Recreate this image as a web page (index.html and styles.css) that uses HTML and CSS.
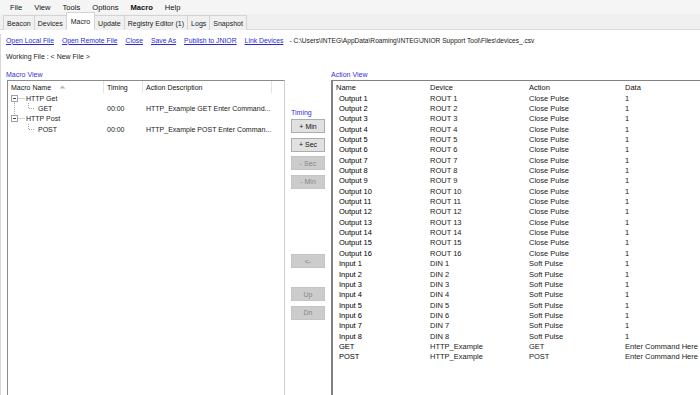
FILE: index.html
```html
<!DOCTYPE html>
<html>
<head>
<meta charset="utf-8">
<link rel="stylesheet" href="styles.css">
</head>
<body>
<div class="menubar">
  <span class="mi">File</span><span class="mi">View</span><span class="mi">Tools</span><span class="mi">Options</span><span class="mi bold">Macro</span><span class="mi">Help</span>
</div>
<div class="tabs">
  <div class="tab">Beacon</div>
  <div class="tab">Devices</div>
  <div class="tab active">Macro</div>
  <div class="tab">Update</div>
  <div class="tab">Registry Editor (1)</div>
  <div class="tab">Logs</div>
  <div class="tab">Snapshot</div>
</div>
<div class="page">
  <div class="links">
    <a class="link">Open Local File</a>
    <a class="link">Open Remote File</a>
    <a class="link">Close</a>
    <a class="link">Save As</a>
    <a class="link">Publish to JNIOR</a>
    <a class="link">Link Devices</a>
    <span class="path">- C:\Users\INTEG\AppData\Roaming\INTEG\JNIOR Support Tool\Files\devices_.csv</span>
  </div>
  <div class="working">Working File : &lt; New File &gt;</div>
  <div class="main">
    <div class="leftcol">
      <div class="glabel">Macro View</div>
      <div class="lv leftlv">
        <div class="lhead">
          <div class="hc">Macro Name <svg class="sort" width="7" height="4" viewBox="0 0 7 4"><path d="M0.5 3.5 L3.5 0.5 L6.5 3.5 Z" fill="#b8b8b8"/></svg></div>
          <div class="hc">Timing</div>
          <div class="hc">Action Description</div>
          <div class="hc last"></div>
        </div>
        <div class="lrow">
          <div class="tc"><svg class="tree" width="18" height="11" viewBox="0 0 18 11"><path d="M6.5 8.5 V11" stroke="#a8a8a8" stroke-dasharray="1 1"/><path d="M9.5 5.5 H17" stroke="#a8a8a8" stroke-dasharray="1 1"/><rect x="3.5" y="2.5" width="6" height="6" fill="#fff" stroke="#a0a0a0"/><path d="M5 5.5 H8" stroke="#444"/></svg><span>HTTP Get</span></div>
          <div class="c"></div><div class="c"></div>
        </div>
        <div class="lrow">
          <div class="tc"><svg class="tree" width="30" height="11" viewBox="0 0 30 11"><path d="M6.5 0 V11" stroke="#a8a8a8" stroke-dasharray="1 1"/><path d="M20.5 0 V5.5 H27" stroke="#a8a8a8" stroke-dasharray="1 1" fill="none"/></svg><span>GET</span></div>
          <div class="c">00:00</div><div class="c">HTTP_Example GET Enter Command...</div>
        </div>
        <div class="lrow">
          <div class="tc"><svg class="tree" width="18" height="11" viewBox="0 0 18 11"><path d="M6.5 0 V2.5" stroke="#a8a8a8" stroke-dasharray="1 1"/><path d="M9.5 5.5 H17" stroke="#a8a8a8" stroke-dasharray="1 1"/><rect x="3.5" y="2.5" width="6" height="6" fill="#fff" stroke="#a0a0a0"/><path d="M5 5.5 H8" stroke="#444"/></svg><span>HTTP Post</span></div>
          <div class="c"></div><div class="c"></div>
        </div>
        <div class="lrow">
          <div class="tc"><svg class="tree" width="30" height="11" viewBox="0 0 30 11"><path d="M20.5 0 V5.5 H27" stroke="#a8a8a8" stroke-dasharray="1 1" fill="none"/></svg><span>POST</span></div>
          <div class="c">00:00</div><div class="c">HTTP_Example POST Enter Comman...</div>
        </div>
      </div>
    </div>
    <div class="midcol">
      <div class="glabel tlabel">Timing</div>
      <div class="btngroup">
        <div class="btn">+ Min</div>
        <div class="btn">+ Sec</div>
        <div class="btn dis">- Sec</div>
        <div class="btn dis">- Min</div>
      </div>
      <div class="btn dis back">&lt;-</div>
      <div class="btngroup updn">
        <div class="btn dis">Up</div>
        <div class="btn dis">Dn</div>
      </div>
    </div>
    <div class="rightcol">
      <div class="glabel">Action View</div>
      <div class="lv rightlv">
        <div class="rhead"><div>Name</div><div>Device</div><div>Action</div><div>Data</div></div>
        <div class="rrow"><div class="nm"><span class="nt">Output 1</span></div><div>ROUT 1</div><div>Close Pulse</div><div>1</div></div>
        <div class="rrow"><div class="nm"><span class="nt">Output 2</span></div><div>ROUT 2</div><div>Close Pulse</div><div>1</div></div>
        <div class="rrow"><div class="nm"><span class="nt">Output 3</span></div><div>ROUT 3</div><div>Close Pulse</div><div>1</div></div>
        <div class="rrow"><div class="nm"><span class="nt">Output 4</span></div><div>ROUT 4</div><div>Close Pulse</div><div>1</div></div>
        <div class="rrow"><div class="nm"><span class="nt">Output 5</span></div><div>ROUT 5</div><div>Close Pulse</div><div>1</div></div>
        <div class="rrow"><div class="nm"><span class="nt">Output 6</span></div><div>ROUT 6</div><div>Close Pulse</div><div>1</div></div>
        <div class="rrow"><div class="nm"><span class="nt">Output 7</span></div><div>ROUT 7</div><div>Close Pulse</div><div>1</div></div>
        <div class="rrow"><div class="nm"><span class="nt">Output 8</span></div><div>ROUT 8</div><div>Close Pulse</div><div>1</div></div>
        <div class="rrow"><div class="nm"><span class="nt">Output 9</span></div><div>ROUT 9</div><div>Close Pulse</div><div>1</div></div>
        <div class="rrow"><div class="nm"><span class="nt">Output 10</span></div><div>ROUT 10</div><div>Close Pulse</div><div>1</div></div>
        <div class="rrow"><div class="nm"><span class="nt">Output 11</span></div><div>ROUT 11</div><div>Close Pulse</div><div>1</div></div>
        <div class="rrow"><div class="nm"><span class="nt">Output 12</span></div><div>ROUT 12</div><div>Close Pulse</div><div>1</div></div>
        <div class="rrow"><div class="nm"><span class="nt">Output 13</span></div><div>ROUT 13</div><div>Close Pulse</div><div>1</div></div>
        <div class="rrow"><div class="nm"><span class="nt">Output 14</span></div><div>ROUT 14</div><div>Close Pulse</div><div>1</div></div>
        <div class="rrow"><div class="nm"><span class="nt">Output 15</span></div><div>ROUT 15</div><div>Close Pulse</div><div>1</div></div>
        <div class="rrow"><div class="nm"><span class="nt">Output 16</span></div><div>ROUT 16</div><div>Close Pulse</div><div>1</div></div>
        <div class="rrow"><div class="nm"><span class="nt">Input 1</span></div><div>DIN 1</div><div>Soft Pulse</div><div>1</div></div>
        <div class="rrow"><div class="nm"><span class="nt">Input 2</span></div><div>DIN 2</div><div>Soft Pulse</div><div>1</div></div>
        <div class="rrow"><div class="nm"><span class="nt">Input 3</span></div><div>DIN 3</div><div>Soft Pulse</div><div>1</div></div>
        <div class="rrow"><div class="nm"><span class="nt">Input 4</span></div><div>DIN 4</div><div>Soft Pulse</div><div>1</div></div>
        <div class="rrow"><div class="nm"><span class="nt">Input 5</span></div><div>DIN 5</div><div>Soft Pulse</div><div>1</div></div>
        <div class="rrow"><div class="nm"><span class="nt">Input 6</span></div><div>DIN 6</div><div>Soft Pulse</div><div>1</div></div>
        <div class="rrow"><div class="nm"><span class="nt">Input 7</span></div><div>DIN 7</div><div>Soft Pulse</div><div>1</div></div>
        <div class="rrow"><div class="nm"><span class="nt">Input 8</span></div><div>DIN 8</div><div>Soft Pulse</div><div>1</div></div>
        <div class="rrow"><div class="nm"><span class="nt">GET</span></div><div>HTTP_Example</div><div>GET</div><div>Enter Command Here</div></div>
        <div class="rrow"><div class="nm"><span class="nt">POST</span></div><div>HTTP_Example</div><div>POST</div><div>Enter Command Here</div></div>
      </div>
    </div>
  </div>
</div>
</body>
</html>
```
FILE: styles.css
```css
* { box-sizing: border-box; }
html, body {
  margin: 0;
  padding: 0;
  width: 700px;
  height: 395px;
  overflow: hidden;
  background: #ffffff;
  font-family: "Liberation Sans", Arial, sans-serif;
  font-size: 7px;
  color: #1a1a1a;
}
.menubar {
  height: 14px;
  background: #f5f5f5;
  display: flex;
  align-items: center;
  padding-left: 10px;
  gap: 12px;
  font-size: 7.6px;
  color: #111;
}
.mi.bold { font-weight: bold; }
.tabs {
  height: 16px;
  background: #f0f0f0;
  display: flex;
  align-items: flex-end;
  padding-left: 3px;
  border-bottom: 1px solid #dadada;
}
.tab {
  height: 15px;
  padding: 0 3px;
  border: 1px solid #d4d4d4;
  border-bottom: none;
  margin-right: -1px;
  background: #f0f0f0;
  display: flex;
  align-items: center;
  font-size: 7px;
  color: #1a1a1a;
  margin-bottom: -1px;
}
.tab.active {
  height: 18px;
  background: #ffffff;
  position: relative;
  z-index: 1;
  padding: 0 4px;
}
.page {
  border-left: 1px solid #d8d8d8;
  height: 366px;
}
.links {
  height: 12px;
  margin-top: 4px;
  padding-left: 5px;
  display: flex;
  align-items: center;
  gap: 8px;
  white-space: nowrap;
  font-size: 6.85px;
}
.link {
  color: #2a2ad8;
  text-decoration: underline;
}
.path { margin-left: -2px; color: #1a1a1a; font-size: 6.6px; }
.working {
  height: 12px;
  margin-top: 4px;
  padding-left: 5px;
  display: flex;
  align-items: center;
}
.main {
  margin-top: 7px;
  display: flex;
  align-items: flex-start;
}
.glabel {
  height: 11px;
  display: flex;
  align-items: center;
  color: #3030e0;
  font-size: 7px;
}
.leftcol {
  margin-left: 5px;
  width: 279px;
}
.lv {
  height: 330px;
  background: #fff;
}
.leftlv {
  margin-left: 1px;
  border: 1px solid #8c8c8c;
  border-right-color: #cfcfcf;
}
.lhead, .lrow {
  display: grid;
  grid-template-columns: 96px 39px 129px 1fr;
}
.lhead { height: 12px; }
.hc {
  display: flex;
  align-items: center;
  padding-left: 3px;
  border-right: 1px solid #e3e3e3;
  color: #111;
}
.hc.last { border-right: none; }
.sort { margin-left: 8px; }
.lrow { height: 10.4px; }
.lrow .c, .lrow .tc {
  display: flex;
  align-items: center;
  padding-left: 3px;
  white-space: nowrap;
  overflow: hidden;
}
.lrow .tc { padding-left: 0; }
.tree { display: block; flex: none; }
.midcol {
  width: 46px;
  padding-left: 6px;
  display: flex;
  flex-direction: column;
}
.tlabel { margin-top: 38px; height: 10px; }
.btngroup {
  display: flex;
  flex-direction: column;
  gap: 4.5px;
  margin-top: 2px;
}
.btn {
  width: 34px;
  height: 14px;
  border: 1px solid #adadad;
  background: #e1e1e1;
  display: flex;
  align-items: center;
  justify-content: center;
  font-size: 7px;
  color: #111;
}
.btn.dis {
  background: #cccccc;
  border-color: #c4c4c4;
  color: #868686;
}
.back { margin-top: 65.5px; }
.updn { margin-top: 19px; }
.rightcol {
  flex: 1;
  min-width: 0;
}
.rightlv {
  border: 1px solid #828282;
  border-left-width: 2px;
  border-right: none;
  font-size: 7.5px;
}
.rhead, .rrow {
  display: grid;
  grid-template-columns: 94px 99px 96px 1fr;
  white-space: nowrap;
}
.rhead { height: 12px; }
.rhead div, .rrow div {
  display: flex;
  align-items: center;
  padding-left: 3px;
  color: #1a1a1a;
}
.rhead div { color: #111; }
.rrow { height: 10.35px; }
.rrow .nm { padding-left: 6px; }
.nt { color: #000000 !important; }
```
